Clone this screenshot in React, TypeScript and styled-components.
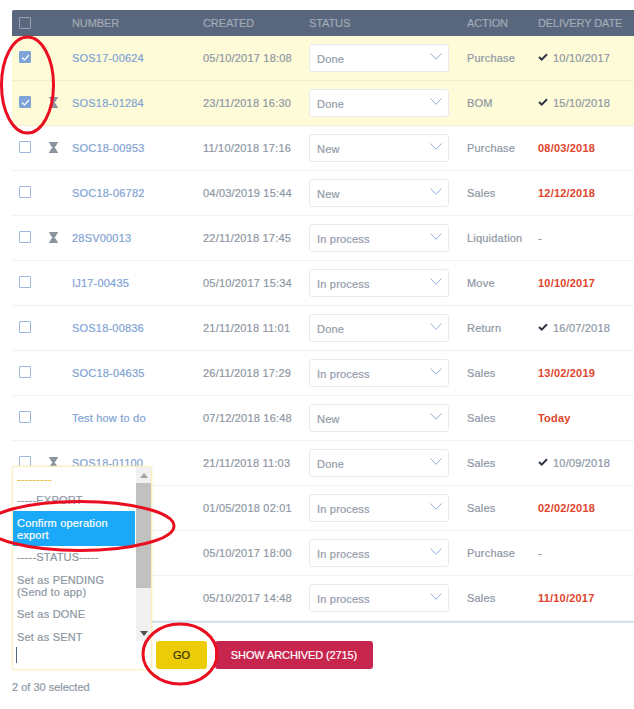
import React from "react";
import styled, { createGlobalStyle } from "styled-components";

type Row = {
  number: string;
  created: string;
  status: string;
  action: string;
  date: string;
  done?: boolean;
  late?: boolean;
  pending?: boolean;
  selected?: boolean;
};

const rows: Row[] = [
  { number: "SOS17-00624", created: "05/10/2017 18:08", status: "Done", action: "Purchase", date: "10/10/2017", done: true, selected: true },
  { number: "SOS18-01284", created: "23/11/2018 16:30", status: "Done", action: "BOM", date: "15/10/2018", done: true, selected: true, pending: true },
  { number: "SOC18-00953", created: "11/10/2018 17:16", status: "New", action: "Purchase", date: "08/03/2018", late: true, pending: true },
  { number: "SOC18-06782", created: "04/03/2019 15:44", status: "New", action: "Sales", date: "12/12/2018", late: true },
  { number: "28SV00013", created: "22/11/2018 17:45", status: "In process", action: "Liquidation", date: "-", pending: true },
  { number: "IJ17-00435", created: "05/10/2017 15:34", status: "In process", action: "Move", date: "10/10/2017", late: true },
  { number: "SOS18-00836", created: "21/11/2018 11:01", status: "Done", action: "Return", date: "16/07/2018", done: true },
  { number: "SOC18-04635", created: "26/11/2018 17:29", status: "In process", action: "Sales", date: "13/02/2019", late: true },
  { number: "Test how to do", created: "07/12/2018 16:48", status: "New", action: "Sales", date: "Today", late: true },
  { number: "SOS18-01100", created: "21/11/2018 11:03", status: "Done", action: "Sales", date: "10/09/2018", done: true, pending: true },
  { number: "", created: "01/05/2018 02:01", status: "In process", action: "Sales", date: "02/02/2018", late: true },
  { number: "", created: "05/10/2017 18:00", status: "In process", action: "Purchase", date: "-" },
  { number: "", created: "05/10/2017 14:48", status: "In process", action: "Sales", date: "11/10/2017", late: true },
];

const GlobalStyle = createGlobalStyle`
  html, body {
    margin: 0;
    padding: 0;
    background: #fff;
  }
  body {
    font-family: "Liberation Sans", Arial, sans-serif;
    font-size: 11px;
    color: #8a94a3;
    -webkit-text-stroke: 0.2px;
  }
`;

const Page = styled.div`
  position: relative;
  width: 634px;
  height: 709px;
  overflow: hidden;
  padding: 10px 0 0 12px;
  box-sizing: border-box;
`;

const Table = styled.div`
  display: flex;
  flex-direction: column;
  border-bottom: 2px solid #d6e2ee;
`;

const columns = "60px 131px 106px 158px 71px 1fr";

const HeaderRow = styled.div`
  display: grid;
  grid-template-columns: ${columns};
  align-items: center;
  height: 26px;
  background: #58667e;
  border-radius: 2px 0 0 0;
  color: #a3abb5;
  font-size: 11px;
  letter-spacing: -0.1px;
`;

const HeaderCell = styled.div`
  white-space: nowrap;
`;

const BodyRow = styled.div<{ $selected?: boolean }>`
  display: grid;
  grid-template-columns: ${columns};
  align-items: center;
  height: 45px;
  box-sizing: border-box;
  background: ${({ $selected }) => ($selected ? "#fefbd8" : "#fff")};
  border-bottom: 1px solid ${({ $selected }) => ($selected ? "#f4efc9" : "#eff1f3")};
  letter-spacing: 0.2px;
`;

const CheckCell = styled.div<{ $head?: boolean }>`
  display: flex;
  align-items: center;
  padding-left: 7px;
  margin-top: ${({ $head }) => ($head ? "0" : "-2px")};
`;

const Box = styled.span<{ $checked?: boolean; $head?: boolean }>`
  display: flex;
  align-items: center;
  justify-content: center;
  box-sizing: border-box;
  width: 12px;
  height: 12px;
  border: 1px solid ${({ $checked, $head }) => ($head ? "#98a1ae" : $checked ? "#7ea3d6" : "#9db7dd")};
  border-radius: 1px;
  background: ${({ $checked, $head }) => ($head ? "transparent" : $checked ? "#7ea3d6" : "#fff")};
`;

const Hourglass = styled.svg`
  margin-left: 18px;
  width: 9px;
  height: 11px;
  flex: none;
`;

const NumberLink = styled.div`
  color: #7fa3d4;
  white-space: nowrap;
  margin-top: -1px;
`;

const Muted = styled.div`
  color: #8e97a4;
  white-space: nowrap;
  margin-top: -1px;
`;

const SelectBox = styled.div`
  display: flex;
  align-items: center;
  justify-content: space-between;
  box-sizing: border-box;
  width: 140px;
  height: 28px;
  margin-top: -1px;
  padding: 2px 6px 0 7px;
  background: #fff;
  border: 1px solid #e8eaee;
  border-radius: 3px;
  color: #939caa;
`;

const Chevron = styled.svg`
  width: 12px;
  height: 7px;
  margin-top: -4px;
`;

const DateCell = styled.div<{ $late?: boolean }>`
  display: flex;
  align-items: center;
  gap: 5px;
  white-space: nowrap;
  margin-top: -1px;
  font-weight: ${({ $late }) => ($late ? "bold" : "normal")};
  -webkit-text-stroke: ${({ $late }) => ($late ? "0" : "0.2px")};
  color: ${({ $late }) => ($late ? "#e0442c" : "#8e97a4")};
`;

const Tick = styled.svg`
  width: 10px;
  height: 8px;
  margin-top: -2px;
`;

const Footer = styled.div`
  display: flex;
  align-items: center;
  gap: 8px;
  height: 28px;
  margin: 18px 0 0 144px;
`;

const Button = styled.button<{ $tone: "go" | "archive" }>`
  height: 28px;
  width: ${({ $tone }) => ($tone === "go" ? "51px" : "158px")};
  padding: 0;
  border: none;
  border-radius: 3px;
  background: ${({ $tone }) => ($tone === "go" ? "#eccb07" : "#c8254e")};
  color: ${({ $tone }) => ($tone === "go" ? "#3a3208" : "#fff")};
  font-family: inherit;
  font-size: 11px;
  letter-spacing: ${({ $tone }) => ($tone === "go" ? "0" : "-0.1px")};
  -webkit-text-stroke: 0.2px;
`;

const Counter = styled.div`
  margin-top: 12px;
  font-size: 11px;
  line-height: 13px;
  color: #8e97a4;
`;

const ListPanel = styled.div`
  position: absolute;
  left: 12px;
  top: 466px;
  width: 140px;
  height: 204px;
  box-sizing: border-box;
  background: #fff;
  border: 1px solid #fbf0bd;
  border-radius: 3px;
  box-shadow: 0 0 2px #f8ecb4;
`;

const ListOptions = styled.div`
  width: 122px;
  padding-top: 6px;
  font-size: 11px;
  line-height: 12px;
  color: #8e97a4;
  letter-spacing: 0.2px;
`;

const ListOption = styled.div<{ $active?: boolean; $rule?: boolean; $gap?: number }>`
  padding: ${({ $active }) => ($active ? "6px 4px 5px" : "0 4px")};
  margin-top: ${({ $gap }) => $gap ?? 0}px;
  background: ${({ $active }) => ($active ? "#1aa8f8" : "transparent")};
  color: ${({ $active, $rule }) => ($active ? "#fff" : $rule ? "#e8c23a" : "#8e97a4")};
`;

const Scrollbar = styled.div`
  position: absolute;
  top: 0;
  right: 0;
  bottom: 28px;
  width: 15px;
  display: flex;
  flex-direction: column;
  background: #f1f1f1;
`;

const ScrollArrow = styled.div`
  display: flex;
  align-items: center;
  justify-content: center;
  height: 16px;
  flex: none;
`;

const ScrollThumb = styled.div`
  height: 105px;
  flex: none;
  background: #c1c1c1;
`;

const ScrollSpacer = styled.div`
  flex: 1;
`;

const InputCaret = styled.div`
  position: absolute;
  left: 3px;
  bottom: 6px;
  width: 1px;
  height: 16px;
  background: #58667e;
`;

const Annotation = styled.svg`
  position: absolute;
  left: 0;
  top: 0;
  width: 634px;
  height: 709px;
  pointer-events: none;
`;

const App: React.FC = () => (
  <>
    <GlobalStyle />
    <Page>
      <Table>
        <HeaderRow>
          <CheckCell $head>
            <Box $head />
          </CheckCell>
          <HeaderCell>NUMBER</HeaderCell>
          <HeaderCell>CREATED</HeaderCell>
          <HeaderCell>STATUS</HeaderCell>
          <HeaderCell>ACTION</HeaderCell>
          <HeaderCell>DELIVERY DATE</HeaderCell>
        </HeaderRow>
        {rows.map((row, index) => (
          <BodyRow key={`${index.toString()}`} $selected={row.selected}>
            <CheckCell>
              <Box $checked={row.selected}>
                {row.selected && (
                  <svg width="9" height="7" viewBox="0 0 9 7">
                    <path d="M1 3.5 L3.5 6 L8 1" fill="none" stroke="#fff" strokeWidth="1.2" />
                  </svg>
                )}
              </Box>
              {row.pending && (
                <Hourglass viewBox="0 0 9 11">
                  <path d="M0 0h9v1.2H8C8 3.6 6 4.6 5.5 5.5 6 6.4 8 7.4 8 9.8h1V11H0V9.8h1C1 7.4 3 6.4 3.5 5.5 3 4.6 1 3.6 1 1.2H0z" fill="#8a93a0" />
                </Hourglass>
              )}
            </CheckCell>
            <NumberLink>{row.number}</NumberLink>
            <Muted>{row.created}</Muted>
            <SelectBox>
              {row.status}
              <Chevron viewBox="0 0 12 7">
                <path d="M0.5 0.5 L6 6.3 L11.5 0.5" fill="none" stroke="#8fb0dc" strokeWidth="1" />
              </Chevron>
            </SelectBox>
            <Muted>{row.action}</Muted>
            <DateCell $late={row.late}>
              {row.done && (
                <Tick viewBox="0 0 10 8">
                  <path d="M1 4 L3.7 6.6 L9 1.2" fill="none" stroke="#2c3542" strokeWidth="2" />
                </Tick>
              )}
              {row.date}
            </DateCell>
          </BodyRow>
        ))}
      </Table>
      <Footer>
        <Button $tone="go">GO</Button>
        <Button $tone="archive">SHOW ARCHIVED (2715)</Button>
      </Footer>
      <Counter>2 of 30 selected</Counter>

      <ListPanel>
        <ListOptions>
          <ListOption $rule>---------</ListOption>
          <ListOption $gap={9}>-----EXPORT-----</ListOption>
          <ListOption $active $gap={5}>
            Confirm operation export
          </ListOption>
          <ListOption $gap={5}>-----STATUS-----</ListOption>
          <ListOption $gap={11}>
            Set as PENDING
            <br />
            (Send to app)
          </ListOption>
          <ListOption $gap={10}>Set as DONE</ListOption>
          <ListOption $gap={11}>Set as SENT</ListOption>
        </ListOptions>
        <Scrollbar>
          <ScrollArrow>
            <svg width="8" height="5" viewBox="0 0 8 5">
              <path d="M4 0 L8 5 H0 Z" fill="#a3a3a3" />
            </svg>
          </ScrollArrow>
          <ScrollThumb />
          <ScrollSpacer />
          <ScrollArrow>
            <svg width="8" height="5" viewBox="0 0 8 5">
              <path d="M0 0 H8 L4 5 Z" fill="#505050" />
            </svg>
          </ScrollArrow>
        </Scrollbar>
        <InputCaret />
      </ListPanel>

      <Annotation viewBox="0 0 634 709">
        <g fill="none" stroke="#ea0f20" strokeWidth="3">
          <ellipse cx="27.5" cy="85" rx="26" ry="48" />
          <ellipse cx="80" cy="526" rx="94" ry="24.5" />
          <ellipse cx="180" cy="654" rx="37" ry="30" />
        </g>
      </Annotation>
    </Page>
  </>
);

export default App;
